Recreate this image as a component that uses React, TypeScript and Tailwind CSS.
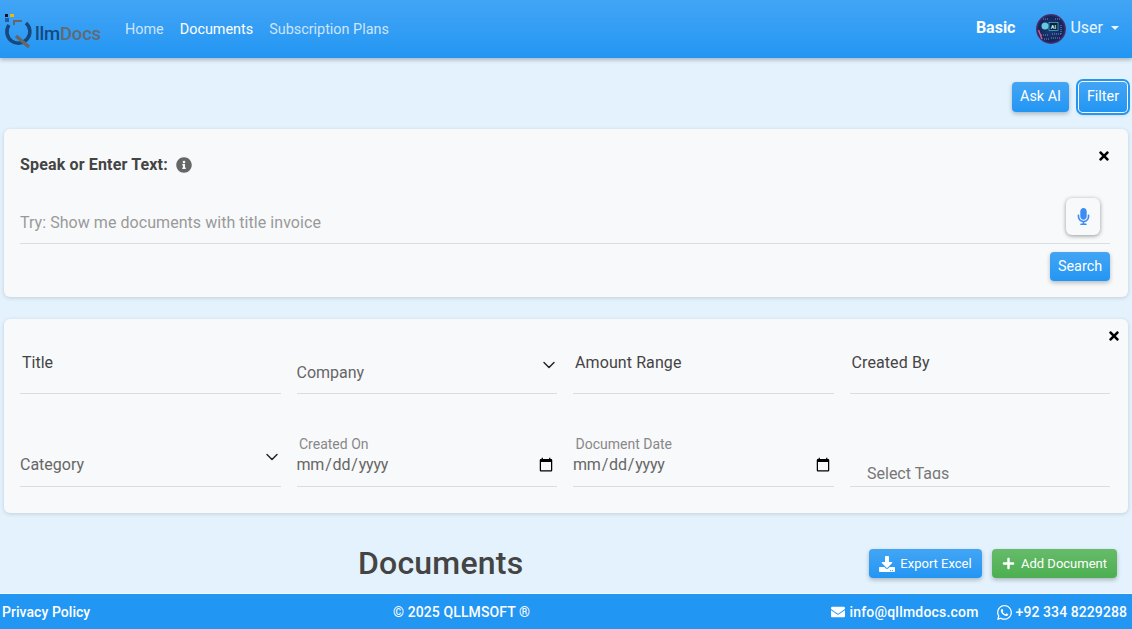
import { FaDownload, FaEnvelope, FaInfoCircle, FaMicrophone, FaPlus, FaTimes, FaWhatsapp } from "react-icons/fa";
import { LuChevronDown } from "react-icons/lu";

const btn =
  "rounded-[4px] bg-gradient-to-b from-[#42a5f5] to-[#2196f3] text-white shadow-[0_2px_4px_rgba(0,0,0,0.25)] flex items-center justify-center";

function Logo() {
  return (
    <div className="relative h-[58px] w-[100px] shrink-0 ml-[4px] flex items-center">
      <svg width="30" height="34" viewBox="0 0 30 34" className="mt-[4px] shrink-0">
        <rect x="1" y="0" width="3" height="3" fill="#111" />
        <rect x="6" y="0" width="4" height="3" fill="#f5b50f" />
        <rect x="1" y="4" width="4" height="4" fill="#1f5fa8" />
        <path d="M9 6 H18 V8 H11 V11 H9 Z" fill="#666" />
        <path d="M5 11 A 11.5 11.5 0 1 0 22 9" fill="none" stroke="#14487f" strokeWidth="3.5" />
        <path d="M12 22 L25 33" stroke="#666" strokeWidth="3.5" />
      </svg>
      <span className="text-[18.5px] font-medium leading-none mt-[11px] ml-[1px] tracking-[-0.2px]">
        <span className="text-[#14487f]">llm</span>
        <span className="text-[#626a72]">Docs</span>
      </span>
    </div>
  );
}

function Avatar() {
  return (
    <svg width="30" height="30" viewBox="0 0 30 30" className="shrink-0">
      <defs>
        <radialGradient id="av" cx="0.5" cy="0.5" r="0.55">
          <stop offset="0" stopColor="#1a3f78" />
          <stop offset="0.75" stopColor="#14245a" />
          <stop offset="1" stopColor="#7a3d80" />
        </radialGradient>
      </defs>
      <circle cx="15" cy="15" r="15" fill="url(#av)" />
      <circle cx="9" cy="12" r="3.5" fill="#7beeff" opacity="0.8" />
      <rect x="13" y="8.5" width="9" height="8" fill="#06243f" stroke="#4fd4ee" strokeWidth="0.6" />
      <text x="17.5" y="14.8" fontSize="5.5" fontWeight="700" fill="#cdf5ff" textAnchor="middle">AI</text>
      <path d="M5 21 H13 M15 24 H24 M19 5 H25 M7 5 H13 M25 11 V20 M8 25 H13 M16 20 H26" stroke="#7f9fe0" strokeWidth="0.9" strokeDasharray="1 1" />
      <path d="M2.5 16 L6 25" stroke="#d0608e" strokeWidth="1.4" />
    </svg>
  );
}

function Navbar() {
  return (
    <nav className="h-[58px] shrink-0 bg-gradient-to-b from-[#42a5f5] to-[#2196f3] shadow-[0_2px_4px_rgba(0,0,0,0.25)] flex items-center pr-[13px] relative">
      <Logo />
      <div className="flex items-center gap-[16px] ml-[21px] mt-[1px] text-[14.4px]">
        <a className="text-white/75">Home</a>
        <a className="text-white">Documents</a>
        <a className="text-white/75">Subscription Plans</a>
      </div>
      <div className="ml-auto flex items-center">
        <span className="text-white font-bold text-[16px] mr-[21px] mt-[-2px]">Basic</span>
        <Avatar />
        <span className="text-white/90 text-[16px] ml-[4px] mt-[-2px]">User</span>
        <span className="ml-[8px] mt-[-2px] border-x-[4.5px] border-t-[4.5px] border-x-transparent border-t-white/90" />
      </div>
    </nav>
  );
}

function Field({ children, className = "" }: { children: React.ReactNode; className?: string }) {
  return <div className={`relative h-[55px] border-b border-[#dcdde3] ${className}`}>{children}</div>;
}

function SelectField({ label, pad, chevron }: { label: string; pad: string; chevron: string }) {
  return (
    <Field className={pad}>
      <div className="text-[16px] leading-[24px] text-[#666]">{label}</div>
      <LuChevronDown className={`absolute text-[#222] ${chevron}`} size={20} strokeWidth={1.7} />
    </Field>
  );
}

function DateField({ label }: { label: string }) {
  return (
    <Field className="pt-[4px]">
      <div className="text-[14px] leading-[16px] text-[#888] pl-[2.5px]">{label}</div>
      <input
        type="date"
        className="block w-full h-[24px] mt-[1px] ml-[-1px] text-[16px] tracking-[-0.2px] text-[#666] bg-transparent outline-none"
      />
    </Field>
  );
}

export default function App() {
  return (
    <div className="h-screen flex flex-col overflow-hidden bg-[#e3f2fd] font-['Roboto',sans-serif]">
      <Navbar />

      <main className="flex-1 overflow-hidden px-[4px]">
        <div className="flex justify-end gap-[10px] pt-[24px] pr-[1px]">
          <button className={`${btn} w-[57px] h-[30px] text-[14.4px]`}>Ask AI</button>
          <button className={`${btn} w-[48px] h-[30px] text-[14.4px] outline-2 outline-offset-[1px] outline-[#2196f3] ring-2 ring-white`}>
            Filter
          </button>
        </div>

        {/* Speak card */}
        <section className="relative mt-[17px] h-[168px] rounded-[6px] bg-[#f8f9fb] shadow-[0_1px_4px_rgba(0,0,0,0.15)] px-[16px] pt-[26px]">
          <FaTimes className="absolute right-[17px] top-[20px] text-black" size={14} />
          <div className="flex items-center gap-[8px] h-[20px]">
            <span className="text-[16px] font-bold tracking-[0.15px] text-[#444]">Speak or Enter Text:</span>
            <FaInfoCircle className="text-[#666]" size={16} />
          </div>
          <div className="mt-[22px] h-[47px] w-[1090px] border-b border-[#dcdde3] flex items-start pr-[10px]">
            <input
              placeholder="Try: Show me documents with title invoice"
              className="flex-1 h-[36px] mt-[7px] text-[16px] tracking-[0.05px] bg-transparent outline-none placeholder:text-[#999]"
            />
            <button className="w-[34px] h-[37px] mt-[1px] rounded-[6px] bg-[#f8f9fb] shadow-[0_1px_4px_rgba(0,0,0,0.4)] flex items-center justify-center">
              <FaMicrophone className="text-[#3b8df5]" size={17} />
            </button>
          </div>
          <div className="flex justify-end w-[1090px] mt-[8px]">
            <button className={`${btn} w-[60px] h-[29px] text-[14.4px]`}>Search</button>
          </div>
        </section>

        {/* Filters card */}
        <section className="relative mt-[22px] h-[194px] rounded-[6px] bg-[#f8f9fb] shadow-[0_1px_4px_rgba(0,0,0,0.15)] px-[16px] pt-[20px]">
          <FaTimes className="absolute right-[7px] top-[10px] text-black" size={14} />
          <div className="grid grid-cols-4 gap-x-[16px] gap-y-[38px] w-[1090px]">
            <Field className="pt-[12px] pl-[2px]">
              <div className="text-[16px] leading-[24px] text-[#444]">Title</div>
            </Field>
            <SelectField label="Company" pad="pt-[22px]" chevron="top-[16px] right-[-2px]" />
            <Field className="pt-[12px] pl-[2px]">
              <div className="text-[16px] leading-[24px] tracking-[0.1px] text-[#444]">Amount Range</div>
            </Field>
            <Field className="pt-[12px] pl-[2px]">
              <div className="text-[16px] leading-[24px] tracking-[0.1px] text-[#444]">Created By</div>
            </Field>
            <SelectField label="Category" pad="pt-[21px]" chevron="top-[15px] right-[-1px]" />
            <DateField label="Created On" />
            <DateField label="Document Date" />
            <Field className="pt-[31px] pl-[17.5px]">
              <div className="h-[16px] overflow-hidden text-[16px] leading-[22px] text-[#777]">Select Tags</div>
            </Field>
          </div>
        </section>

        <div className="flex items-start justify-between pl-[354px] pr-[11px] mt-[31px]">
          <h1 className="text-[32px] font-medium leading-[38px] tracking-[0.2px] text-[#444]">Documents</h1>
          <div className="flex gap-[10px] mt-[5px]">
            <button className={`${btn} w-[113px] h-[29px] gap-[5px] text-[13px]`}>
              <FaDownload size={16} />
              Export Excel
            </button>
            <button className="w-[125px] h-[29px] rounded-[4px] bg-gradient-to-b from-[#66bb6a] to-[#4caf50] text-white text-[13px] shadow-[0_2px_4px_rgba(0,0,0,0.25)] flex items-center justify-center gap-[6px]">
              <FaPlus size={13} />
              Add Document
            </button>
          </div>
        </div>
      </main>

      <footer className="h-[36px] shrink-0 bg-[#2196f3] border-t border-[#f1f8fe] pt-[1px] text-white text-[14px] font-medium flex items-center justify-between pl-[2px] pr-[5px] relative">
        <a className="tracking-[0.05px]">Privacy Policy</a>
        <span className="absolute left-[393px] tracking-[0.1px]">© 2025 QLLMSOFT ®</span>
        <div className="flex items-center gap-[17px]">
          <span className="flex items-center gap-[4px] tracking-[0.2px]">
            <FaEnvelope size={14} />
            info@qllmdocs.com
          </span>
          <span className="flex items-center gap-[3px] tracking-[0.08px]">
            <FaWhatsapp size={17} />
            +92 334 8229288
          </span>
        </div>
      </footer>
    </div>
  );
}
